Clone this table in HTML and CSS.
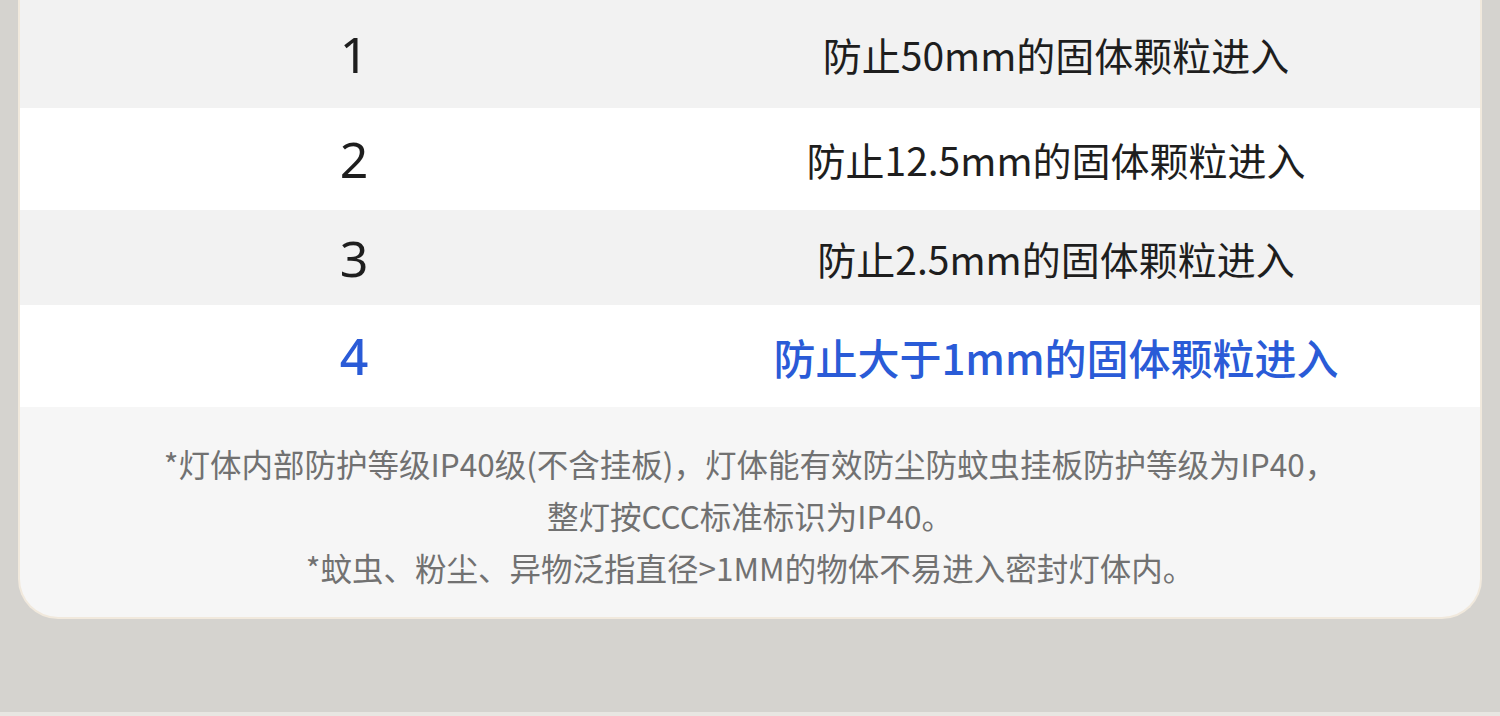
FILE: index.html
```html
<!DOCTYPE html>
<html lang="zh">

<head>
    <meta charset="utf-8">
    <meta name="viewport" content="width=device-width, initial-scale=1.0">
    <title>防尘等级</title>

    <link rel="stylesheet" href="styles.css">
</head>

<body>
    <main class="card">
        <section class="tabel">
            <div class="rad graa">
                <span class="niveau">1</span>
                <span class="tekst">防止50mm的固体颗粒进入</span>
            </div>
            <div class="rad">
                <span class="niveau">2</span>
                <span class="tekst">防止12.5mm的固体颗粒进入</span>
            </div>
            <div class="rad graa lav">
                <span class="niveau">3</span>
                <span class="tekst">防止2.5mm的固体颗粒进入</span>
            </div>
            <div class="rad valgt">
                <span class="niveau">4</span>
                <span class="tekst">防止大于1mm的固体颗粒进入</span>
            </div>
        </section>

        <section class="noter">
            <p>*灯体内部防护等级IP40级(不含挂板)，灯体能有效防尘防蚊虫挂板防护等级为IP40，<br>整灯按CCC标准标识为IP40。</p>
            <p>*蚊虫、粉尘、异物泛指直径&gt;1MM的物体不易进入密封灯体内。</p>
        </section>
    </main>
    <div class="bund"></div>
</body>

</html>
```

FILE: styles.css
```css
body {
    margin: 0;
    background: #d5d3cf;
    font-family: "Noto Sans CJK SC", "Noto Sans", sans-serif;
    height: 716px;
    overflow: hidden;
    position: relative;
}

.card {
    margin: 0 18px;
    background: #f6f6f6;
    border: 2px solid #f1e9dd;
    border-top: none;
    border-radius: 0 0 40px 40px;
    overflow: hidden;
}

.rad {
    display: grid;
    grid-template-columns: 668px 736px;
    align-items: center;
    height: 102px;
    background: #ffffff;
    color: #1e1e1e;
}

.rad.graa {
    background: #f2f2f2;
}

.rad:first-child {
    height: 108px;
}

.rad.lav {
    height: 95px;
}

.niveau {
    text-align: center;
    font-size: 50px;
    font-family: "Noto Sans", sans-serif;
}

.tekst {
    text-align: center;
    font-size: 39px;
}

.valgt {
    color: #2a5bd7;
}

.valgt .niveau {
    font-weight: 500;
}

.valgt .tekst {
    font-size: 42px;
    font-weight: 500;
}

.noter {
    padding: 30px 0 24px;
    text-align: center;
    color: #717171;
    font-size: 31.5px;
    line-height: 52px;
}

.noter p {
    margin: 0;
}

.bund {
    position: absolute;
    left: 0;
    right: 0;
    bottom: 0;
    height: 4px;
    background: #e8e6e2;
}
```
